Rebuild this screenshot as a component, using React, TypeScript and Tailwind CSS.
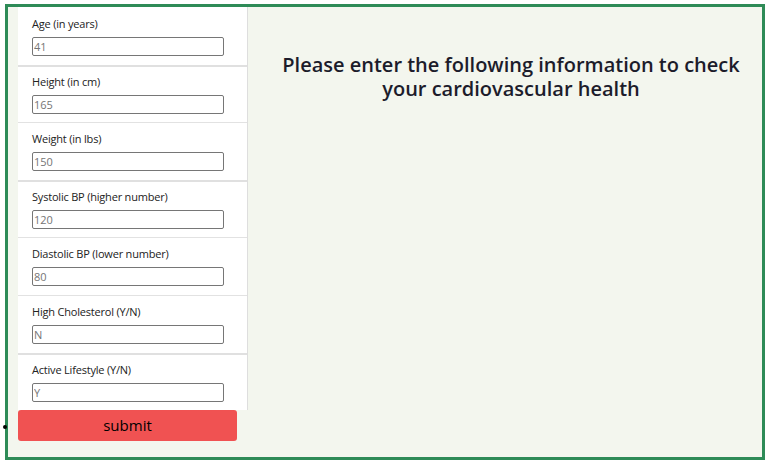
import React from 'react';

const fields = [
  { label: 'Age (in years)', value: '41' },
  { label: 'Height (in cm)', value: '165' },
  { label: 'Weight (in lbs)', value: '150' },
  { label: 'Systolic BP (higher number)', value: '120' },
  { label: 'Diastolic BP (lower number)', value: '80' },
  { label: 'High Cholesterol (Y/N)', value: 'N' },
  { label: 'Active Lifestyle (Y/N)', value: 'Y' },
];

// sections whose top divider renders a bit heavier in the screenshot
const thick = [1, 3, 6];

export default function App() {
  return (
    <div className="w-[765px] h-[463px] bg-white pt-[4px] pl-[5px]" style={{ fontFamily: '"Open Sans", "Noto Sans", sans-serif' }}>
      <div className="w-[760px] h-[456px] border-[3px] border-[#2e8b57] bg-[#f3f6ee] flex">
        <div className="relative ml-[10px] w-[230px] shrink-0">
          <div className="bg-white border-r border-[#dedede]">
            {fields.map((f, i) => (
              <div
                key={i}
                className={`h-[57.6px] px-[14px] ${i === 0 ? 'pt-[9px]' : thick.includes(i) ? 'pt-[7px] border-t-2 border-[#e0e0e0]' : 'pt-[8px] border-t border-[#e2e2e2]'}`}
              >
                <div className="text-[11px] leading-[16px] text-[#222] tracking-[-0.2px]">{f.label}</div>
                <input
                  readOnly
                  placeholder={f.value}
                  className="mt-[5px] w-[192px] h-[19px] border border-[#767676] rounded-[2px] px-[1px] text-[11px] text-[#757575] placeholder:text-[#757575] outline-none bg-white"
                />
              </div>
            ))}
          </div>
          <button className="w-[219px] h-[31px] bg-[#f05252] rounded-[3px] text-[15px] text-black leading-[31px]">submit</button>
          <span className="absolute left-[-15px] top-[418px] w-[4px] h-[4px] rounded-full bg-black" />
        </div>
        <div className="flex-1 pt-[46px] pl-[32px] pr-[20px] text-center">
          <h1 className="text-[20px] leading-[24px] font-semibold text-[#1c1c2b]">
            Please enter the following information to check your cardiovascular health
          </h1>
        </div>
      </div>
    </div>
  );
}
